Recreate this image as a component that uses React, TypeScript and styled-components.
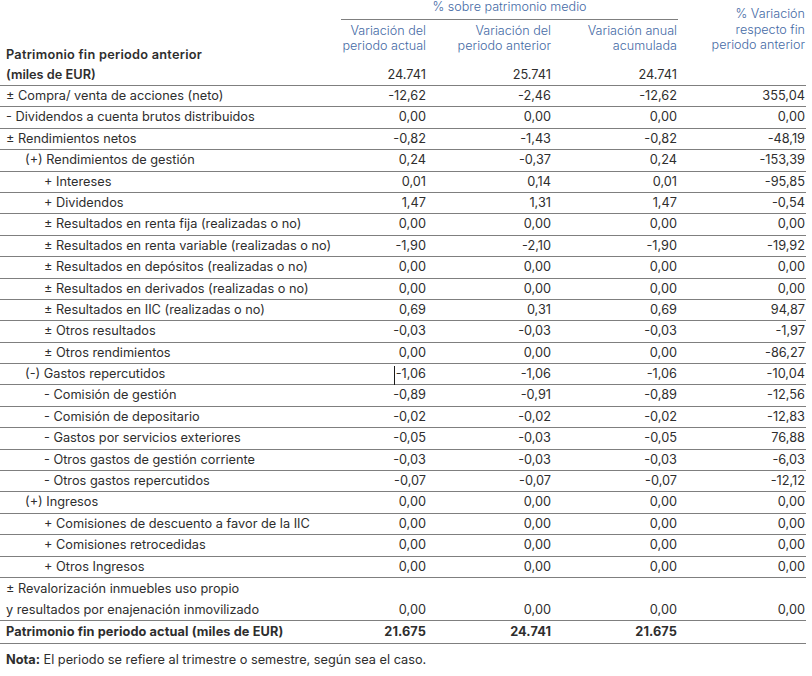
import React from "react";
import styled, { createGlobalStyle } from "styled-components";

const Global = createGlobalStyle`
  html, body { margin: 0; padding: 0; background: #ffffff; }
  body { font-family: Inter, Roboto, "Liberation Sans", Arial, sans-serif; color: #2e2e2e; }
`;

const COLS = "341px 86px 125px 126px 128px";
const LINE = "#7f7f7f";

const Wrap = styled.div`
  width: 806px;
  position: relative;
  font-size: 12.75px;
  font-weight: 400;
`;

const Head = styled.div`
  display: grid;
  grid-template-columns: ${COLS};
  grid-template-rows: 20px 44.6px;
  color: #456aa5;
  font-size: 12.6px;
  font-weight: 300;
`;

const GroupHead = styled.div`
  grid-column: 2 / 5;
  grid-row: 1;
  text-align: center;
  line-height: 14px;
  border-bottom: 1px solid ${LINE};
`;

const SubHead = styled.div<{ $col: number }>`
  grid-column: ${(p) => p.$col};
  grid-row: 2;
  text-align: right;
  padding-top: 3px;
  padding-right: 1px;
  line-height: 15px;
`;

const VarHead = styled.div`
  grid-column: 5;
  grid-row: 1 / 3;
  text-align: right;
  padding-top: 6px;
  padding-right: 1px;
  line-height: 15.5px;
`;

const HeadLabel = styled.div`
  grid-column: 1;
  grid-row: 2;
  align-self: end;
  padding-left: 6px;
  line-height: 21px;
  font-size: 12.75px;
  font-weight: 600;
  letter-spacing: 0.25px;
  color: #2e2e2e;
`;

const Row = styled.div<{ $h?: number; $bold?: boolean; $noLine?: boolean }>`
  display: grid;
  grid-template-columns: ${COLS};
  align-items: end;
  box-sizing: border-box;
  height: ${(p) => p.$h ?? 21.4}px;
  border-bottom: ${(p) => (p.$noLine ? "none" : `1px solid ${LINE}`)};
  font-weight: ${(p) => (p.$bold ? 700 : 400)};
  letter-spacing: ${(p) => (p.$bold ? "0.1px" : "normal")};
  line-height: 20.4px;
`;

const Label = styled.div<{ $indent: number; $medium?: boolean }>`
  padding-left: ${(p) => 6 + p.$indent * 19}px;
  white-space: nowrap;
  font-weight: ${(p) => (p.$medium ? 600 : "inherit")};
`;

const Num = styled.div`
  text-align: right;
  padding-right: 1px;
  white-space: nowrap;
`;

const Note = styled.div`
  padding: 6px 0 0 6px;
  line-height: 20px;
`;

const NoteKey = styled.span`
  font-weight: 700;
`;

const Caret = styled.div`
  position: absolute;
  left: 394px;
  top: 366px;
  width: 1px;
  height: 19px;
  background: #1a1a1a;
`;

type R = [string, number, string, string, string, string];

const rows: R[] = [
  ["± Compra/ venta de acciones (neto)", 0, "-12,62", "-2,46", "-12,62", "355,04"],
  ["- Dividendos a cuenta brutos distribuidos", 0, "0,00", "0,00", "0,00", "0,00"],
  ["± Rendimientos netos", 0, "-0,82", "-1,43", "-0,82", "-48,19"],
  ["(+) Rendimientos de gestión", 1, "0,24", "-0,37", "0,24", "-153,39"],
  ["+ Intereses", 2, "0,01", "0,14", "0,01", "-95,85"],
  ["+ Dividendos", 2, "1,47", "1,31", "1,47", "-0,54"],
  ["± Resultados en renta fija (realizadas o no)", 2, "0,00", "0,00", "0,00", "0,00"],
  ["± Resultados en renta variable (realizadas o no)", 2, "-1,90", "-2,10", "-1,90", "-19,92"],
  ["± Resultados en depósitos (realizadas o no)", 2, "0,00", "0,00", "0,00", "0,00"],
  ["± Resultados en derivados (realizadas o no)", 2, "0,00", "0,00", "0,00", "0,00"],
  ["± Resultados en IIC (realizadas o no)", 2, "0,69", "0,31", "0,69", "94,87"],
  ["± Otros resultados", 2, "-0,03", "-0,03", "-0,03", "-1,97"],
  ["± Otros rendimientos", 2, "0,00", "0,00", "0,00", "-86,27"],
  ["(-) Gastos repercutidos", 1, "-1,06", "-1,06", "-1,06", "-10,04"],
  ["- Comisión de gestión", 2, "-0,89", "-0,91", "-0,89", "-12,56"],
  ["- Comisión de depositario", 2, "-0,02", "-0,02", "-0,02", "-12,83"],
  ["- Gastos por servicios exteriores", 2, "-0,05", "-0,03", "-0,05", "76,88"],
  ["- Otros gastos de gestión corriente", 2, "-0,03", "-0,03", "-0,03", "-6,03"],
  ["- Otros gastos repercutidos", 2, "-0,07", "-0,07", "-0,07", "-12,12"],
  ["(+) Ingresos", 1, "0,00", "0,00", "0,00", "0,00"],
  ["+ Comisiones de descuento a favor de la IIC", 2, "0,00", "0,00", "0,00", "0,00"],
  ["+ Comisiones retrocedidas", 2, "0,00", "0,00", "0,00", "0,00"],
  ["+ Otros Ingresos", 2, "0,00", "0,00", "0,00", "0,00"],
];

export default function App() {
  return (
    <Wrap>
      <Global />
      <Head>
        <GroupHead>% sobre patrimonio medio</GroupHead>
        <HeadLabel>Patrimonio fin periodo anterior</HeadLabel>
        <SubHead $col={2}>
          Variación del
          <br />
          periodo actual
        </SubHead>
        <SubHead $col={3}>
          Variación del
          <br />
          periodo anterior
        </SubHead>
        <SubHead $col={4}>
          Variación anual
          <br />
          acumulada
        </SubHead>
        <VarHead>
          % Variación
          <br />
          respecto fin
          <br />
          periodo anterior
        </VarHead>
      </Head>
      <Row>
        <Label $indent={0} $medium>
          (miles de EUR)
        </Label>
        <Num>24.741</Num>
        <Num>25.741</Num>
        <Num>24.741</Num>
        <Num />
      </Row>
      {rows.map(([l, ind, a, b, c, d]) => (
        <Row key={l}>
          <Label $indent={ind}>{l}</Label>
          <Num>{a}</Num>
          <Num>{b}</Num>
          <Num>{c}</Num>
          <Num>{d}</Num>
        </Row>
      ))}
      <Row $h={43}>
        <Label $indent={0}>
          ± Revalorización inmuebles uso propio
          <br />y resultados por enajenación inmovilizado
        </Label>
        <Num>0,00</Num>
        <Num>0,00</Num>
        <Num>0,00</Num>
        <Num>0,00</Num>
      </Row>
      <Row $h={22.8} $bold>
        <Label $indent={0}>Patrimonio fin periodo actual (miles de EUR)</Label>
        <Num>21.675</Num>
        <Num>24.741</Num>
        <Num>21.675</Num>
        <Num />
      </Row>
      <Note>
        <NoteKey>Nota:</NoteKey> El periodo se refiere al trimestre o semestre, según sea el caso.
      </Note>
      <Caret />
    </Wrap>
  );
}
